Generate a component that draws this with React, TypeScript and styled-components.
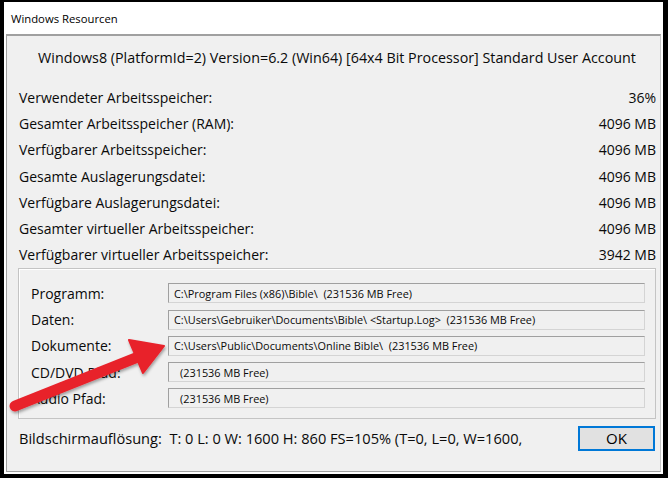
import React from "react";
import styled, { createGlobalStyle } from "styled-components";

const GlobalStyle = createGlobalStyle`
  html, body {
    margin: 0;
    padding: 0;
    background: #000;
  }
  * {
    box-sizing: border-box;
  }
`;

const Frame = styled.div`
  position: relative;
  width: 668px;
  height: 478px;
  background: #000;
  padding: 2px 5px 4px 4px;
  font-family: "Open Sans", "Noto Sans", sans-serif;
  color: #0a0a0a;
`;

const Window = styled.div`
  height: 100%;
  background: #fff;
  display: flex;
  flex-direction: column;
`;

const TitleBar = styled.div`
  height: 32px;
  display: flex;
  align-items: center;
  padding-left: 7px;
  font-size: 11.3px;
  color: #000;
`;

const Client = styled.div`
  flex: 1;
  margin: 0 2px 2px 2px;
  background: #f0f0f0;
  border-top: 2px solid #a0a0a0;
  border-left: 1px solid #a0a0a0;
  border-right: 1px solid #c8c8c8;
  border-bottom: 1px solid #a0a0a0;
  padding: 8px 4px 0 11px;
  display: flex;
  flex-direction: column;
`;

const Header = styled.div`
  height: 26px;
  display: flex;
  align-items: center;
  justify-content: center;
  font-size: 14.3px;
  margin-bottom: 14px;
`;

const InfoRow = styled.div`
  height: 26.3px;
  display: flex;
  align-items: center;
  justify-content: space-between;
  padding-left: 1px;
  font-size: 14px;
`;

const GroupBox = styled.div`
  border: 1px solid #c4c4c4;
  box-shadow: inset 1px 1px 0 #fff;
  padding: 11px 10px 6px 12px;
  display: flex;
  flex-direction: column;
`;

const PathRow = styled.div`
  height: 26.3px;
  display: flex;
  align-items: center;
`;

const PathLabel = styled.div`
  width: 137px;
  font-size: 14px;
`;

const PathField = styled.div<{ $indent?: boolean }>`
  flex: 1;
  height: 20px;
  display: flex;
  align-items: center;
  padding-left: ${(p) => (p.$indent ? "11px" : "5px")};
  border-top: 1px solid #a0a0a0;
  border-left: 1px solid #a0a0a0;
  border-right: 1px solid #d4d4d4;
  border-bottom: 1px solid #d4d4d4;
  font-size: 10.9px;
  white-space: pre;
`;

const Footer = styled.div`
  display: flex;
  align-items: center;
  justify-content: space-between;
  margin-top: 7px;
  padding-left: 1px;
`;

const FooterText = styled.div`
  font-size: 14.6px;
  white-space: pre;
`;

const OkButton = styled.button`
  width: 77px;
  height: 25px;
  margin-right: 1px;
  background: #e1e1e1;
  border: 2px solid #0078d7;
  font-family: inherit;
  font-size: 15px;
  color: #000;
  padding: 0;
`;

const ArrowLayer = styled.svg`
  position: absolute;
  left: 0;
  top: 0;
  pointer-events: none;
`;

const memory: [string, string][] = [
  ["Verwendeter Arbeitsspeicher:", "36%"],
  ["Gesamter Arbeitsspeicher (RAM):", "4096 MB"],
  ["Verfügbarer Arbeitsspeicher:", "4096 MB"],
  ["Gesamte Auslagerungsdatei:", "4096 MB"],
  ["Verfügbare Auslagerungsdatei:", "4096 MB"],
  ["Gesamter virtueller Arbeitsspeicher:", "4096 MB"],
  ["Verfügbarer virtueller Arbeitsspeicher:", "3942 MB"],
];

const paths: { label: string; value: string; indent?: boolean }[] = [
  { label: "Programm:", value: "C:\\Program Files (x86)\\Bible\\  (231536 MB Free)" },
  {
    label: "Daten:",
    value: "C:\\Users\\Gebruiker\\Documents\\Bible\\ <Startup.Log>  (231536 MB Free)",
  },
  {
    label: "Dokumente:",
    value: "C:\\Users\\Public\\Documents\\Online Bible\\  (231536 MB Free)",
  },
  { label: "CD/DVD Pfad:", value: "(231536 MB Free)", indent: true },
  { label: "Audio Pfad:", value: "(231536 MB Free)", indent: true },
];

const App: React.FC = () => {
  return (
    <>
      <GlobalStyle />
      <Frame>
        <Window>
          <TitleBar>Windows Resourcen</TitleBar>
          <Client>
            <Header>
              Windows8 (PlatformId=2) Version=6.2 (Win64) [64x4 Bit Processor] Standard User Account
            </Header>
            {memory.map(([label, value]) => (
              <InfoRow key={label}>
                <span>{label}</span>
                <span>{value}</span>
              </InfoRow>
            ))}
            <GroupBox>
              {paths.map((p) => (
                <PathRow key={p.label}>
                  <PathLabel>{p.label}</PathLabel>
                  <PathField $indent={p.indent}>{p.value}</PathField>
                </PathRow>
              ))}
            </GroupBox>
            <Footer>
              <FooterText>
                Bildschirmauflösung:  T: 0 L: 0 W: 1600 H: 860 FS=105% (T=0, L=0, W=1600,
              </FooterText>
              <OkButton>OK</OkButton>
            </Footer>
          </Client>
        </Window>
        <ArrowLayer width="668" height="478" viewBox="0 0 668 478">
          <defs>
            <filter id="shadow" x="-10%" y="-10%" width="120%" height="130%">
              <feDropShadow dx="1" dy="2" stdDeviation="1.5" floodColor="#000" floodOpacity="0.35" />
            </filter>
          </defs>
          <g filter="url(#shadow)" fill="#e8212b" stroke="#e8212b">
            <line x1="15" y1="406" x2="138" y2="357" strokeWidth="11" strokeLinecap="round" />
            <polygon points="129,340 164,346 143,373" strokeWidth="2" strokeLinejoin="round" />
          </g>
        </ArrowLayer>
      </Frame>
    </>
  );
};

export default App;
